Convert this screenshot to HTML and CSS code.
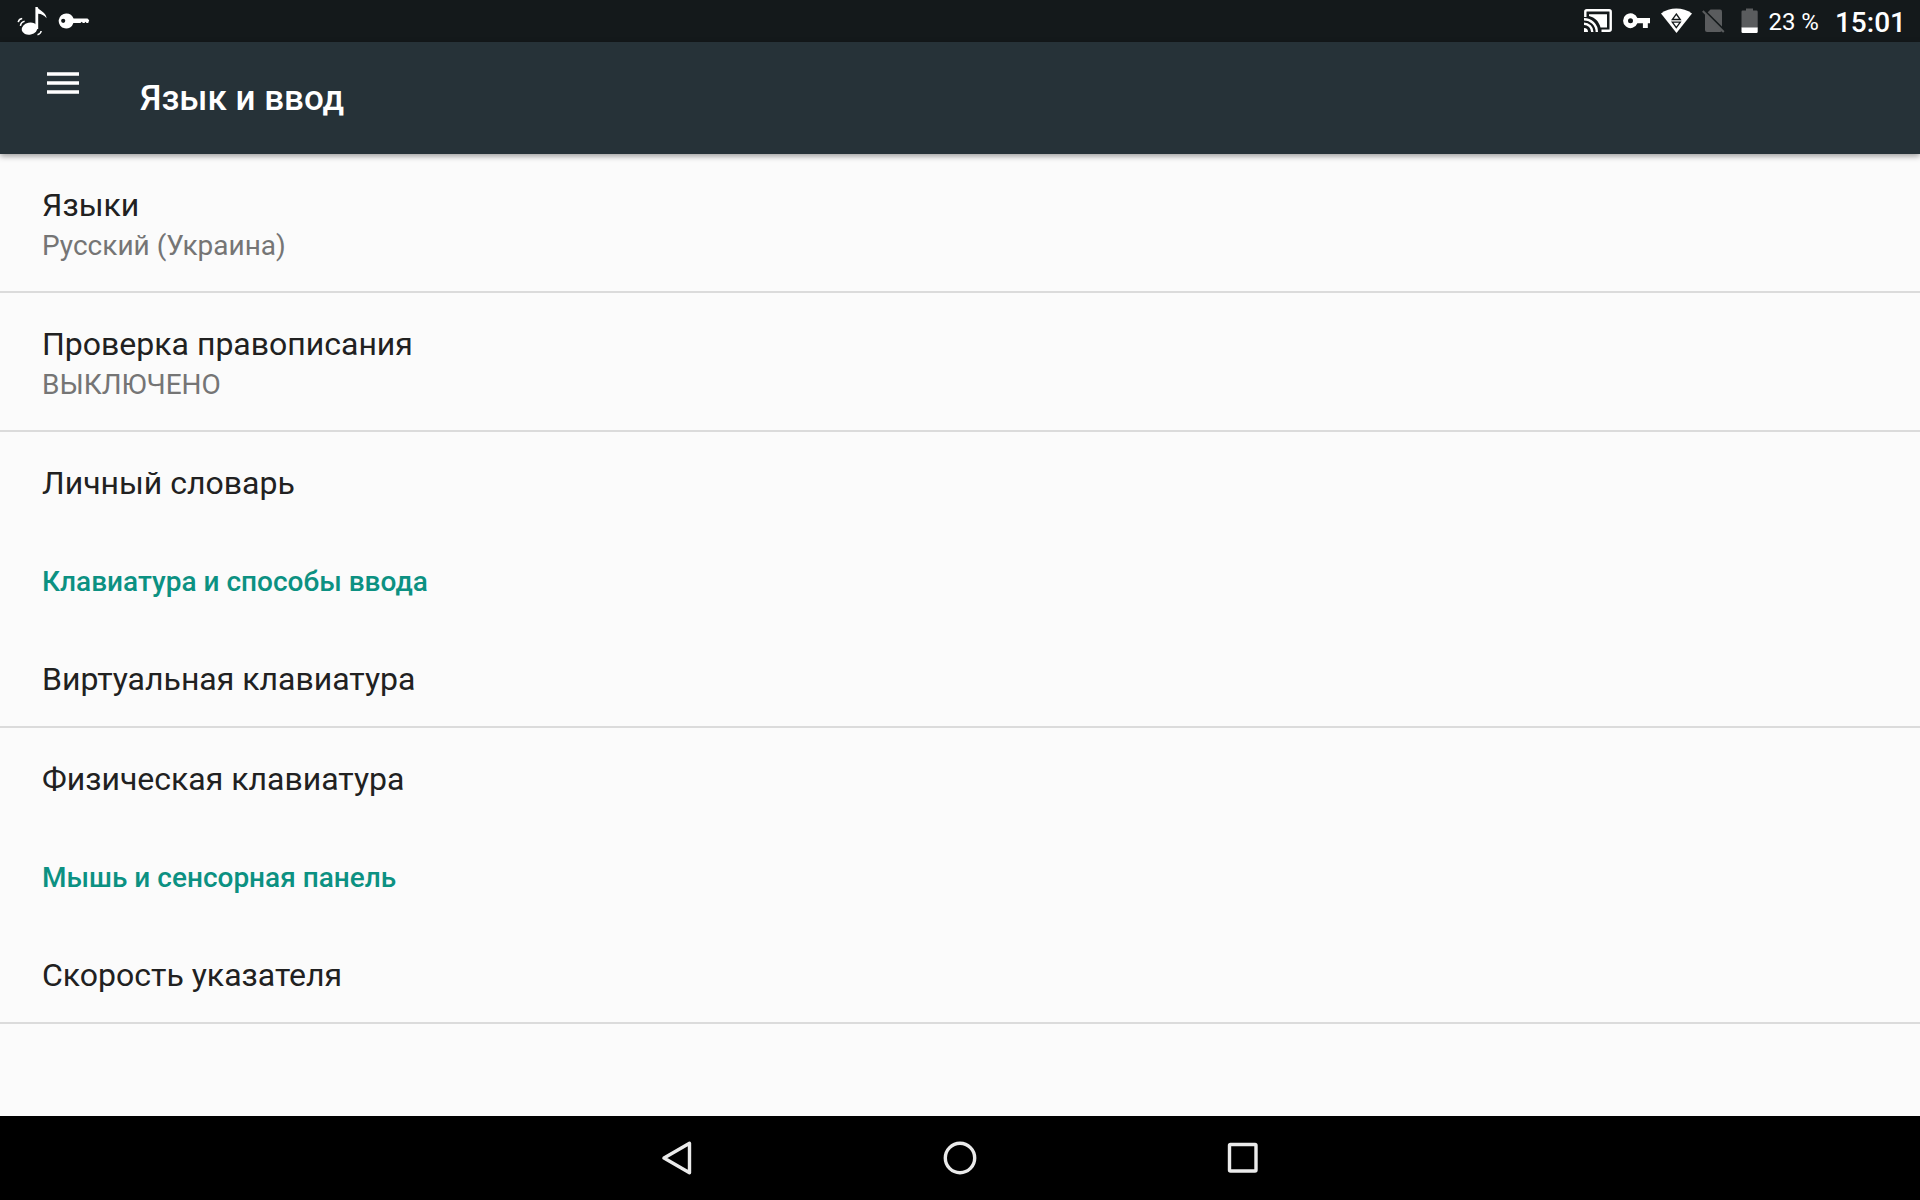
FILE: index.html
```html
<!DOCTYPE html>
<html lang="ru">
<head>
<meta charset="UTF-8" />
<meta name="viewport" content="width=device-width, initial-scale=1" />
<title>Язык и ввод</title>
<link rel="stylesheet" href="styles.css">
</head>
<body>

<div class="status-bar">
  <div class="notifications">
    <svg width="32" height="32" viewBox="0 0 32 32">
      <ellipse cx="12.6" cy="23.7" rx="8" ry="6" transform="rotate(-12 12.6 23.7)" fill="#fff"/>
      <path d="M18.4 24V2h2.2c.6 3.4 8.6 4.6 9 11.3-2.4-3.2-5.3-4.3-8.4-4.5V24z" fill="#fff"/>
      <path d="M1.2 17.2Q1.8 14 5.2 13.5M3.4 20.8Q4 17 7.6 16.2M20.5 29.7Q23.7 29 24.2 26" fill="none" stroke="#fff" stroke-width="1.5"/>
    </svg>
    <svg width="33" height="18" viewBox="0 0 33 18">
      <path fill="#fff" fill-rule="evenodd" d="M8.5 1.5c3.3 0 6 2 7.1 4.9H29.5l1.7 1.8-1 2.8h-1.7l-1-1.2-1 1.2h-1.6l-1.2-1.2-1.2 1.2h-7.1A7.5 7.5 0 1 1 8.5 1.5zM5.2 6.7a2.1 2.1 0 1 0 0 4.2 2.1 2.1 0 0 0 0-4.2z"/>
    </svg>
  </div>
  <div class="system-icons">
    <!-- cast -->
    <svg width="29" height="24" viewBox="0 0 29 24">
      <path d="M1.3 8V2.8Q1.3 1.3 2.8 1.3H25.2Q26.7 1.3 26.7 2.8V20.2Q26.7 21.7 25.2 21.7H17.5" fill="none" stroke="#fff" stroke-width="2.4"/>
      <path d="M5 5.2H23V18.5H16.5C15 12.5 11 8.5 5 7z" fill="#fff"/>
      <path d="M0 10.2A12.8 12.8 0 0 1 12.8 23M0 14.7A8.3 8.3 0 0 1 8.3 23" fill="none" stroke="#fff" stroke-width="2.4"/>
      <path d="M0 19a4 4 0 0 1 4 4H0z" fill="#fff"/>
    </svg>
    <!-- vpn -->
    <svg width="28" height="16" viewBox="0 0 28 16">
      <path fill="#fff" fill-rule="evenodd" d="M14.4 5.1H27v5.2h-2.2V15h-4.9v-4.7h-5.5a7.4 7.4 0 1 1 0-5.2zM7.5 5.2a2.5 2.5 0 1 0 0 5 2.5 2.5 0 0 0 0-5z"/>
    </svg>
    <!-- wi-fi -->
    <svg width="31" height="26" viewBox="0 0 31 26">
      <path d="M0 5.5C8.5-1.2 22-1.2 31 5.5L15.5 25z" fill="#fff"/>
      <path d="M15.3 6L19.3 11.5h-8zM11.3 14.2h8l-4 5.5z" fill="none" stroke="#14191b" stroke-width="1.3"/>
    </svg>
    <!-- no sim -->
    <svg width="23" height="24" viewBox="0 0 23 24">
      <path d="M8.5.5H18Q20 .5 20 2.5V21Q20 23 18 23H5Q3 23 3 21V6z" fill="#5a5c5e"/>
      <path d="M1.5 1.2L23 22.7" stroke="#14191b" stroke-width="3"/>
      <path d="M.8 2L21.8 23" stroke="#5a5c5e" stroke-width="2"/>
    </svg>
    <!-- battery -->
    <svg class="battery" width="17" height="26" viewBox="0 0 17 26">
      <path d="M5 .5h7v2h3.5q1.2 0 1.2 1.2V20H.5V3.7q0-1.2 1.2-1.2H5z" fill="#5a5c5e"/>
      <path d="M.5 19.5h16.2v4.3q0 1.2-1.2 1.2H1.7Q.5 25 .5 23.8z" fill="#fff"/>
    </svg>
    <span class="battery-level">23 %</span>
    <span class="clock">15:01</span>
  </div>
</div>

<header class="app-bar">
  <button class="menu-button" aria-label="Меню">
    <svg width="32" height="22" viewBox="0 0 32 22">
      <path d="M0 2h32M0 11h32M0 20h32" stroke="#fff" stroke-width="3.6"/>
    </svg>
  </button>
  <h1>Язык и ввод</h1>
</header>

<main class="settings">
  <a class="item divided" href="#">
    <span class="item-title">Языки</span>
    <span class="item-summary">Русский (Украина)</span>
  </a>
  <a class="item divided" href="#">
    <span class="item-title">Проверка правописания</span>
    <span class="item-summary">ВЫКЛЮЧЕНО</span>
  </a>
  <a class="item" href="#">
    <span class="item-title">Личный словарь</span>
  </a>
  <h2>Клавиатура и способы ввода</h2>
  <a class="item divided" href="#">
    <span class="item-title">Виртуальная клавиатура</span>
  </a>
  <a class="item" href="#">
    <span class="item-title">Физическая клавиатура</span>
  </a>
  <h2>Мышь и сенсорная панель</h2>
  <a class="item divided" href="#">
    <span class="item-title">Скорость указателя</span>
  </a>
</main>

<nav class="nav-bar">
  <button aria-label="Назад">
    <svg width="34" height="34" viewBox="0 0 34 34">
      <path d="M29.5 2.3V31.7L4 17z" fill="none" stroke="#ebebeb" stroke-width="3.4" stroke-linejoin="round"/>
    </svg>
  </button>
  <button aria-label="Домой">
    <svg width="34" height="34" viewBox="0 0 34 34">
      <circle cx="17" cy="17" r="14.7" fill="none" stroke="#ebebeb" stroke-width="3.4"/>
    </svg>
  </button>
  <button aria-label="Недавние">
    <svg width="34" height="34" viewBox="0 0 34 34">
      <rect x="3.5" y="3.5" width="26.5" height="26.5" rx="1" fill="none" stroke="#ebebeb" stroke-width="3.4"/>
    </svg>
  </button>
</nav>

</body>
</html>
```
FILE: styles.css
```css
body {
  margin: 0;
  min-height: 100vh;
  display: flex;
  flex-direction: column;
  font-family: Roboto, "Noto Sans", sans-serif;
  background-color: #fbfbfb;
  color: #212121;
}
svg {
  display: block;
}
button {
  display: flex;
  align-items: center;
  justify-content: center;
  padding: 0;
  border: none;
  background: none;
  cursor: pointer;
}
.status-bar {
  display: flex;
  align-items: center;
  justify-content: space-between;
  height: 42px;
  padding: 0 14px 0 17px;
  background-color: #14191b;
  color: #fff;
}
.notifications,
.system-icons {
  display: flex;
  align-items: center;
  gap: 10px;
}
.notifications {
  gap: 9px;
}
.battery {
  margin-left: 6px;
}
.battery-level,
.clock {
  padding-top: 2px;
}
.battery-level {
  font-size: 24px;
}
.clock {
  margin-left: 6px;
  font-size: 28px;
  font-weight: 500;
}
.app-bar {
  display: flex;
  height: 112px;
  background-color: #263238;
  color: #fff;
  box-shadow: 0 2px 6px rgba(0, 0, 0, 0.4);
}
.menu-button {
  width: 126px;
  height: 82px;
}
.app-bar h1 {
  align-self: center;
  margin: 0 0 0 14px;
  padding-top: 2px;
  font-size: 35px;
  line-height: 42px;
  font-weight: 500;
}
.settings {
  flex-grow: 1;
}
.item {
  display: flex;
  flex-direction: column;
  padding: 32px 42px 28px;
  color: inherit;
  text-decoration: none;
}
.divided {
  border-bottom: 2px solid #dbdbdb;
}
.item-title {
  font-size: 32px;
  line-height: 38px;
}
.item-summary {
  margin-top: 5px;
  font-size: 28px;
  line-height: 34px;
  color: #757575;
}
.settings h2 {
  margin: 0;
  padding: 35px 42px 29px;
  font-size: 28px;
  line-height: 34px;
  font-weight: 500;
  color: #0c9182;
}
.nav-bar {
  display: flex;
  justify-content: center;
  background-color: #000;
}
.nav-bar button {
  width: 283px;
  height: 84px;
}
```
